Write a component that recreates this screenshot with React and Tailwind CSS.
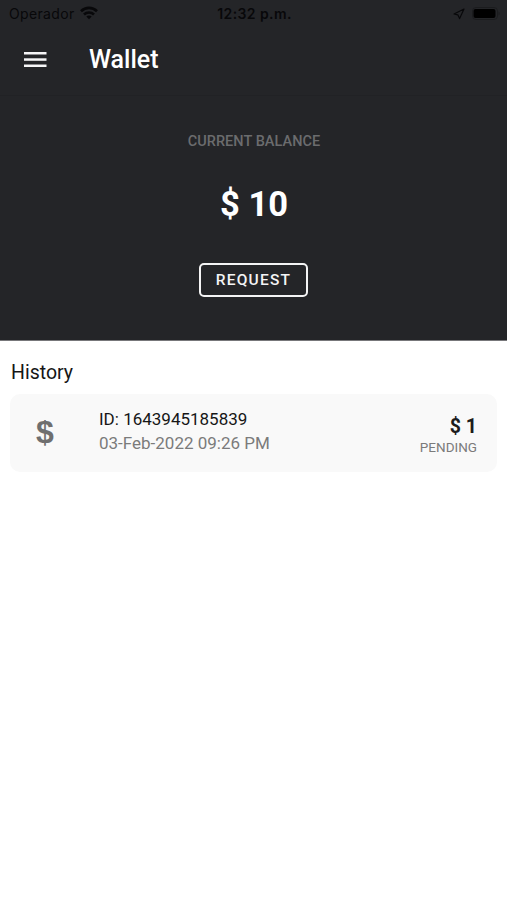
const history = [
  { id: '1643945185839', date: '03-Feb-2022 09:26 PM', amount: '$ 1', status: 'PENDING' },
];

function StatusBar() {
  return (
    <div className="h-7 grid grid-cols-3 items-center pl-[9px] pr-[7px] font-['Inter',sans-serif] text-[14px] leading-7 text-[#08080a]">
      <div className="flex items-center gap-[5px]">
        <span className="tracking-[0.35px]">Operador</span>
        <svg className="w-[18px] h-[14px] -mt-[2px]" viewBox="0 0 18 14" fill="none" stroke="currentColor" strokeWidth="2.6">
          <path d="M1 5.2C5.6 0.7 12.4 0.7 17 5.2" />
          <path d="M4 8.5C6.8 5.8 11.2 5.8 14 8.5" />
          <path d="M9 13.2L6.3 10.5C7.8 9.1 10.2 9.1 11.7 10.5Z" fill="currentColor" stroke="none" />
        </svg>
      </div>
      <span className="text-center font-semibold whitespace-nowrap tracking-[0.4px]">12:32 p.m.</span>
      <div className="flex items-center justify-end gap-[7px] pb-px">
        <svg className="w-[12px] h-[12px]" viewBox="0 0 12 12" fill="none" stroke="currentColor" strokeWidth="1.2" strokeLinejoin="round">
          <path d="M11 1L1 6L4.8 6.8L6.6 10.6Z" />
        </svg>
        <svg className="w-[28px] h-[13px]" viewBox="0 0 28 13">
          <rect x="0.5" y="0.5" width="25" height="12" rx="3.5" fill="none" stroke="#1b1c1e" />
          <rect x="1.5" y="2" width="22" height="9" rx="2" fill="#000" />
          <path d="M26.5 4.5C28 5 28 8 26.5 8.5Z" fill="#1b1c1e" />
        </svg>
      </div>
    </div>
  );
}

function Header() {
  return (
    <header className="h-[68px] flex items-center pl-6 pb-[4px] border-b border-[#212225]">
      <button type="button" aria-label="Menu" className="w-[65px]">
        <svg className="w-[23px] h-[17px]" viewBox="0 0 23 17" fill="#f6f6f7">
          <rect y="1" width="22.5" height="2.5" />
          <rect y="7.3" width="22.5" height="2.5" />
          <rect y="13.5" width="22.5" height="2.5" />
        </svg>
      </button>
      <h1 className="text-[25px] leading-8 font-medium text-white">Wallet</h1>
    </header>
  );
}

function Balance() {
  return (
    <section className="h-[244px] flex flex-col items-center pt-[36px]">
      <p className="pl-px text-[14.5px] leading-5 font-medium text-[#6b6c6e] tracking-[0.05px]">CURRENT BALANCE</p>
      <p className="mt-[32px] pl-px text-[34.5px] leading-10 font-bold text-white">$ 10</p>
      <button
        type="button"
        className="mt-[39px] w-[109px] h-[34px] pt-px rounded-[5px] border-2 border-[#f4f4f5] text-[15.5px] leading-none font-medium tracking-[1.2px] text-[#f4f4f5]"
      >
        REQUEST
      </button>
    </section>
  );
}

function HistoryItem({ item }) {
  return (
    <li className="h-[78px] flex items-center rounded-[10px] bg-[#f9f9f9] pl-[26px] pr-[20px]">
      <span className="w-[63px] pb-[2px] font-['Liberation_Sans',sans-serif] text-[32px] leading-8 font-bold text-[#6f6f6f]">$</span>
      <div className="flex-1 pb-[4px] text-[17px] leading-6">
        <p className="text-[#161616]">ID: {item.id}</p>
        <p className="text-[#7b7b7b]">{item.date}</p>
      </div>
      <div className="text-right pt-[6px]">
        <p className="text-[19.5px] leading-[21px] font-bold text-[#1c1c1c]">{item.amount}</p>
        <p className="text-[13.5px] leading-5 text-[#7b7b7b]">{item.status}</p>
      </div>
    </li>
  );
}

function App() {
  return (
    <div className="w-full h-[900px] bg-white font-['Roboto',sans-serif]">
      <div className="bg-[#242528] border-b border-[#77777a]">
        <StatusBar />
        <Header />
        <Balance />
      </div>
      <main className="px-[10px] pt-[19px]">
        <h2 className="pl-px text-[19.5px] leading-[26px] text-[#161616]">History</h2>
        <ul className="mt-[8px]">
          {history.map((item) => (
            <HistoryItem key={item.id} item={item} />
          ))}
        </ul>
      </main>
    </div>
  );
}

export default App;
